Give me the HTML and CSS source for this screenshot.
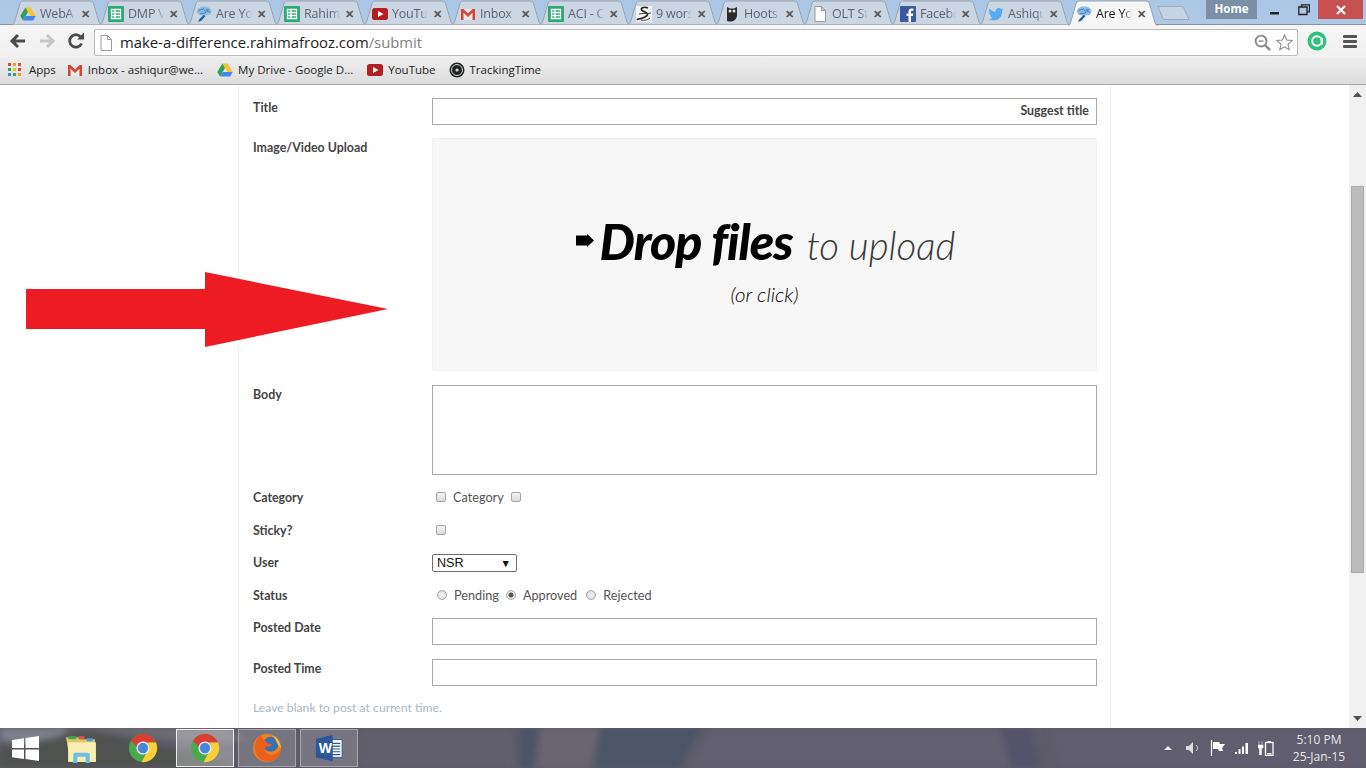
FILE: index.html
```html
<!DOCTYPE html>
<html lang="en">
<head>
<meta charset="utf-8">
<title>Are You - Submit</title>
<link rel="stylesheet" href="styles.css">
</head>
<body>
<svg class="defs" width="0" height="0" aria-hidden="true">
  <symbol id="tabshape" viewBox="0 0 90 25" preserveAspectRatio="none">
    <path d="M0 24.500C1.500 24.500 2 23.500 2.500 22L8 3.500C8.500 2 9.500 1 11.500 1H78C80 1 81 2 81.500 3.500L87 22C87.500 23.500 88.500 24.500 90 24.500"/>
  </symbol>
  <symbol id="i-drive" viewBox="0 0 16 16">
    <path fill="#fbc02d" d="M5.300 1.500h5.400l5 8.500H10.500z"/>
    <path fill="#2e9e5b" d="M5.300 1.500 .3 10l2.700 4.500L8 6z"/>
    <path fill="#4285f4" d="M3 14.500h10.200l2.500-4.500H5.700z"/>
  </symbol>
  <symbol id="i-sheet" viewBox="0 0 16 16">
    <rect width="16" height="16" rx="1" fill="#2fa974"/>
    <path fill="none" stroke="#fff" stroke-width="1.300" d="M3.500 3.500h9v9h-9zM3.500 6.500h9M3.500 9.500h9M7 3.500v9"/>
  </symbol>
  <symbol id="i-brain" viewBox="0 0 16 16">
    <path fill="#8fbce0" d="M1 5.500C1 2.500 4 .5 8 .5s7.500 2 7.500 4.500-2 4.800-5 4.300c-2 1-4 .8-5 0C3 9.500 1 8.500 1 5.500z"/>
    <path fill="none" stroke="#2f76b5" stroke-width=".9" d="M2.500 5c2-2.500 4-.5 5.500-2.500M4 8c2-2 4 1 6-2M8 5c2 0 4-.5 6 1.500M10 3c1 1 2 1 3 .5"/>
    <path fill="#1f5fa3" d="M7.500 9 9.500 10 5 15 2 15.800 3.500 13z"/>
  </symbol>
  <symbol id="i-yt" viewBox="0 0 16 16">
    <rect y="2" width="16" height="12" rx="2.500" fill="#b3201f"/>
    <path fill="#fff" d="M6 5l5.500 3L6 11z"/>
  </symbol>
  <symbol id="i-gmail" viewBox="0 0 16 16">
    <path fill="#e8e8e8" d="M1 3h14v11H1z"/>
    <path fill="#d5463a" d="M1 3h2.500L8 7.500 12.500 3H15v11h-2.500V6.800L8 11 3.500 6.800V14H1z"/>
  </symbol>
  <symbol id="i-s" viewBox="0 0 16 16">
    <rect width="16" height="16" fill="#f2f2f2"/>
    <path fill="none" stroke="#222" stroke-width="1.700" d="M12 2C7 0 3 3 7 5s7 3 2 6-7 1-8 3"/>
    <path fill="none" stroke="#444" stroke-width="1" d="M3 8c4-1 8 0 12-1M5 14c3 1 7 0 9-2"/>
  </symbol>
  <symbol id="i-owl" viewBox="0 0 16 16">
    <path fill="#2b2b2b" d="M3 1l3 1.500h4L13 1v8c0 3-2 6-6 6.500-1 0-2 0-4-.500z"/>
    <circle cx="6" cy="5" r="1.500" fill="#ddd"/><circle cx="10" cy="5" r="1.500" fill="#ddd"/>
  </symbol>
  <symbol id="i-doc" viewBox="0 0 16 16">
    <path fill="#fff" stroke="#9a9a9a" d="M3 .5h6.500L13.500 4.500V15.500H3zM9.500 .5v4h4"/>
  </symbol>
  <symbol id="i-fb" viewBox="0 0 16 16">
    <rect width="16" height="16" rx="1" fill="#3b5a9a"/>
    <path fill="#fff" d="M11 16V10h2l.3-2.500H11V6c0-.8.3-1.200 1.200-1.200h1.200V2.600C13 2.500 12.300 2.500 11.600 2.500 9.800 2.500 8.500 3.600 8.500 5.600v1.900h-2V10h2v6z"/>
  </symbol>
  <symbol id="i-tw" viewBox="0 0 16 16">
    <path fill="#55acee" d="M15.500 3.400c-.6.300-1.200.4-1.800.5.600-.4 1.100-1 1.400-1.700-.6.400-1.300.6-2 .8a3.100 3.100 0 0 0-5.300 2.800C5.200 5.700 2.900 4.500 1.400 2.600c-.8 1.400-.4 3.200 1 4.100-.5 0-1-.1-1.400-.4 0 1.500 1.100 2.800 2.500 3.100-.5.100-.9.100-1.400 0 .4 1.200 1.500 2.100 2.900 2.100A6.300 6.300 0 0 1 .5 13c5.800 3.500 14.200.200 13.600-8.200.6-.4 1-.9 1.400-1.400z"/>
  </symbol>
  <symbol id="i-chrome" viewBox="0 0 32 32">
    <circle cx="16" cy="16" r="15" fill="#4aa84e"/>
    <path fill="#dc3d33" d="M3.200 8.200A15 15 0 0 1 29.800 10H16a6 6 0 0 0-6 5z"/>
    <path fill="#fbd035" d="M29.800 10A15 15 0 0 1 14.500 31L21 19a6 6 0 0 0-.5-9z"/>
    <circle cx="16" cy="16" r="7" fill="#eee"/>
    <circle cx="16" cy="16" r="5.500" fill="#4a86d8"/>
  </symbol>
</svg>

<div class="screen">
  <header class="chrome">
    <div class="tabstrip">
      <div class="tab"><svg class="tab-bg"><use href="#tabshape"/></svg><svg class="fav"><use href="#i-drive"/></svg><span class="tab-title">WebA</span><span class="tab-x">✕</span></div>
      <div class="tab"><svg class="tab-bg"><use href="#tabshape"/></svg><svg class="fav"><use href="#i-sheet"/></svg><span class="tab-title">DMP V</span><span class="tab-x">✕</span></div>
      <div class="tab"><svg class="tab-bg"><use href="#tabshape"/></svg><svg class="fav"><use href="#i-brain"/></svg><span class="tab-title">Are Yo</span><span class="tab-x">✕</span></div>
      <div class="tab"><svg class="tab-bg"><use href="#tabshape"/></svg><svg class="fav"><use href="#i-sheet"/></svg><span class="tab-title">Rahim</span><span class="tab-x">✕</span></div>
      <div class="tab"><svg class="tab-bg"><use href="#tabshape"/></svg><svg class="fav"><use href="#i-yt"/></svg><span class="tab-title">YouTu</span><span class="tab-x">✕</span></div>
      <div class="tab"><svg class="tab-bg"><use href="#tabshape"/></svg><svg class="fav"><use href="#i-gmail"/></svg><span class="tab-title">Inbox</span><span class="tab-x">✕</span></div>
      <div class="tab"><svg class="tab-bg"><use href="#tabshape"/></svg><svg class="fav"><use href="#i-sheet"/></svg><span class="tab-title">ACI - C</span><span class="tab-x">✕</span></div>
      <div class="tab"><svg class="tab-bg"><use href="#tabshape"/></svg><svg class="fav"><use href="#i-s"/></svg><span class="tab-title">9 wors</span><span class="tab-x">✕</span></div>
      <div class="tab"><svg class="tab-bg"><use href="#tabshape"/></svg><svg class="fav"><use href="#i-owl"/></svg><span class="tab-title">Hoots</span><span class="tab-x">✕</span></div>
      <div class="tab"><svg class="tab-bg"><use href="#tabshape"/></svg><svg class="fav"><use href="#i-doc"/></svg><span class="tab-title">OLT St</span><span class="tab-x">✕</span></div>
      <div class="tab"><svg class="tab-bg"><use href="#tabshape"/></svg><svg class="fav"><use href="#i-fb"/></svg><span class="tab-title">Facebo</span><span class="tab-x">✕</span></div>
      <div class="tab"><svg class="tab-bg"><use href="#tabshape"/></svg><svg class="fav"><use href="#i-tw"/></svg><span class="tab-title">Ashiqu</span><span class="tab-x">✕</span></div>
      <div class="tab tab-active"><svg class="tab-bg"><use href="#tabshape"/></svg><svg class="fav"><use href="#i-brain"/></svg><span class="tab-title">Are Yo</span><span class="tab-x">✕</span></div>
      <svg class="newtab" viewBox="0 0 34 16"><path d="M1 1.500H24C26 1.500 26.500 2.500 27 3.500L32 14.500H8C6.500 14.500 6 14 5.500 12.500z"/></svg>
      <div class="win">
        <div class="home">Home</div>
        <div class="win-controls">
          <span class="win-btn"><svg class="win-ico" viewBox="0 0 12 12"><path d="M1 8h9v2.500H1z" fill="#222"/></svg></span>
          <span class="win-btn"><svg class="win-ico" viewBox="0 0 12 12"><path d="M3.500 2.500V.8h8v7H9.500M.8 3h8.200v7.500H.8z" fill="none" stroke="#222" stroke-width="1.300"/></svg></span>
          <span class="win-close"><svg class="win-ico" viewBox="0 0 12 12"><path d="M2 2l8 8M10 2l-8 8" stroke="#fff" stroke-width="2.200"/></svg></span>
        </div>
      </div>
    </div>

    <div class="toolbar">
      <svg class="nav" viewBox="0 0 18 18"><path d="M16 9H4M9 3 3 9l6 6" fill="none" stroke="#4a4a4a" stroke-width="3"/></svg>
      <svg class="nav" viewBox="0 0 18 18"><path d="M2 9h12M9 3l6 6-6 6" fill="none" stroke="#c6c6c6" stroke-width="3"/></svg>
      <svg class="nav nav-reload" viewBox="0 0 18 18"><path d="M14.500 11.500A6.200 6.200 0 1 1 13.500 4.800" fill="none" stroke="#4a4a4a" stroke-width="2.800"/><path d="M10 7.500h7V.5z" fill="#4a4a4a"/></svg>
      <div class="omnibox">
        <svg class="omni-doc" viewBox="0 0 16 16"><use href="#i-doc"/></svg>
        <span class="url">make-a-difference.rahimafrooz.com<span class="url-path">/submit</span></span>
        <svg class="omni-ico" viewBox="0 0 18 18"><circle cx="7.500" cy="7.500" r="5.800" fill="none" stroke="#8a8a8a" stroke-width="2"/><path d="M12 12l5 5" stroke="#8a8a8a" stroke-width="2.600"/><path d="M5 7.500h5" stroke="#8a8a8a" stroke-width="1.500"/></svg>
        <svg class="omni-ico" viewBox="0 0 18 18"><path d="M9 1l2.300 5.400 5.700.5-4.300 3.800 1.300 5.800L9 13.500l-5 3 1.300-5.800L1 6.900l5.700-.5z" fill="#fff" stroke="#8a8a8a" stroke-width="1.100"/></svg>
      </div>
      <svg class="ext" viewBox="0 0 20 20"><circle cx="10" cy="10" r="9.500" fill="#2fc27f"/><circle cx="10" cy="10" r="4.800" fill="none" stroke="#fff" stroke-width="2"/><path d="M14.800 7v6.500" stroke="#fff" stroke-width="2"/></svg>
      <div class="menu"><i></i><i></i><i></i></div>
    </div>

    <div class="bookmarks">
      <span class="bm"><span class="apps"><i></i><i></i><i></i><i></i><i></i><i></i><i></i><i></i><i></i></span>Apps</span>
      <span class="bm"><svg class="fav"><use href="#i-gmail"/></svg>Inbox - ashiqur@we...</span>
      <span class="bm bm-wide"><svg class="fav"><use href="#i-drive"/></svg>My Drive - Google D...</span>
      <span class="bm bm-yt"><svg class="fav"><use href="#i-yt"/></svg>YouTube</span>
      <span class="bm"><svg class="fav" viewBox="0 0 16 16"><circle cx="8" cy="8" r="7.500" fill="#222"/><circle cx="8" cy="8" r="5.500" fill="none" stroke="#cfd8d6" stroke-width="1"/><circle cx="8" cy="8" r="1.600" fill="#ddd"/></svg>TrackingTime</span>
    </div>
  </header>

  <main class="viewport">
    <div class="page">
      <form class="panel">
        <div class="row row-title">
          <label class="lbl">Title</label>
          <div class="input input-title"><span class="suggest">Suggest title</span></div>
        </div>
        <div class="row row-upload">
          <label class="lbl">Image/Video Upload</label>
          <div class="dropzone">
            <div class="drop-line">
              <svg class="drop-arrow" viewBox="0 0 18 13"><path d="M0 1.500h11V0l7 6.500-7 6.500v-1.500H0z" fill="#000"/></svg>
              <span class="drop-strong">Drop files</span>
              <span class="drop-light">to upload</span>
            </div>
            <div class="drop-click">(or click)</div>
          </div>
        </div>
        <div class="row row-body">
          <label class="lbl">Body</label>
          <div class="input input-body"></div>
        </div>
        <div class="row row-check">
          <label class="lbl">Category</label>
          <div class="opts"><span class="check"></span><span class="opt-text">Category</span><span class="check"></span></div>
        </div>
        <div class="row row-sticky">
          <label class="lbl">Sticky?</label>
          <div class="opts"><span class="check"></span></div>
        </div>
        <div class="row row-user">
          <label class="lbl">User</label>
          <div class="select"><span>NSR</span><span class="caret">▼</span></div>
        </div>
        <div class="row row-status">
          <label class="lbl">Status</label>
          <div class="opts opts-radio">
            <span class="radio"></span><span class="opt-text">Pending</span>
            <span class="radio radio-on"></span><span class="opt-text opt-approved">Approved</span>
            <span class="radio"></span><span class="opt-text">Rejected</span>
          </div>
        </div>
        <div class="row row-date">
          <label class="lbl">Posted Date</label>
          <div class="input"></div>
        </div>
        <div class="row row-time">
          <label class="lbl">Posted Time</label>
          <div class="input"></div>
        </div>
        <p class="hint">Leave blank to post at current time.</p>
      </form>
    </div>
    <div class="scrollbar">
      <svg class="sb-arrow" viewBox="0 0 9 5"><path d="M4.500 5 0 0h9z" fill="#505050"/></svg>
      <div class="sb-thumb"></div>
      <svg class="sb-arrow" viewBox="0 0 9 5"><path d="M4.500 5 0 0h9z" fill="#505050"/></svg>
    </div>
    <svg class="red-arrow" viewBox="0 0 362 76"><path d="M0 17H179V0L362 37 179 75V57H0z" fill="#ed1c24"/></svg>
  </main>

  <footer class="taskbar">
    <svg class="tb-wall" viewBox="0 0 1366 40" preserveAspectRatio="none" aria-hidden="true">
      <path fill="#7e828d" d="M0 0H70L58 10 30 16 0 12z"/>
      <path fill="#50524f" d="M0 40V20L40 13 70 6 95 3 130 12 190 24 240 40z"/>
      <path fill="#6e6c72" d="M75 0H225L250 12 200 16 140 8z"/>
      <path fill="#625f6c" d="M360 0H510L515 40H360z"/>
      <path fill="#4c5468" d="M520 0H540L534 40H520z"/>
      <path fill="#6a6570" d="M540 0H600L590 40H535z"/>
      <path fill="#4a5566" d="M600 0H702L690 18 680 40H596z"/>
      <path fill="#625f70" d="M712 0H1000L1010 40H690z"/>
      <path fill="#55536a" d="M1000 0H1030L1040 40H1012z"/>
      <path fill="#605d6e" d="M1050 0H1366V40H1060z"/>
    </svg>
    <svg class="start" viewBox="0 0 27 25"><path d="M0 4 12 2.300V12H0zM13.500 2 27 0V12H13.500zM0 13.500H12V23L0 21.300zM13.500 13.500H27V25L13.500 23z" fill="#fff"/></svg>
    <span class="tb-item">
      <svg class="tb-ico tb-folder" viewBox="0 0 32 32"><path d="M1 5h12l2 2h14v22H5z" fill="#e3c766"/><path d="M3 10h27v19H3z" fill="#fbeeb0"/><path d="M3 4h8v3H3z" fill="#3aa655"/><path d="M13 4h6v3h-6z" fill="#d9534f"/><path d="M21 6h6v3h-6z" fill="#4a9ae0"/><path d="M8 30V22a2 2 0 0 1 2-2h12a2 2 0 0 1 2 2v8h-4v-6h-8v6z" fill="#6cc0ea"/></svg>
    </span>
    <span class="tb-item"><svg class="tb-ico"><use href="#i-chrome"/></svg></span>
    <span class="tb-item tb-open tb-active"><svg class="tb-ico"><use href="#i-chrome"/></svg></span>
    <span class="tb-item tb-open">
      <svg class="tb-ico" viewBox="0 0 32 32"><circle cx="16" cy="16" r="15" fill="#f0811f"/><circle cx="20" cy="12" r="8" fill="#3a6fb0"/><path d="M9 2C1 9 0 22 11 29c9 4 19-2 20-12-2 4-7 7-12 6-5-2-6-6-4-9 2 1 5 1 6-2-3 0-5-1-6-3-2-1-4-3-6-7z" fill="#e8601c"/><path d="M22 3c5 2 8 7 9 13l-3-3-3-6z" fill="#f7c531"/></svg>
    </span>
    <span class="tb-item tb-open">
      <svg class="tb-ico" viewBox="0 0 32 32"><path d="M12 7h18v19H12z" fill="#fff" stroke="#2b579a"/><path d="M19 11h9M19 14h9M19 17h9M19 20h9M19 23h9" stroke="#2b579a" stroke-width="1.200"/><path d="M2 6 20 2v28L2 26z" fill="#2b579a"/><text x="5" y="21" class="word-w">W</text></svg>
    </span>
    <div class="tray">
      <svg class="tray-up" viewBox="0 0 8 4"><path d="M4 0l4 4H0z" fill="#fff"/></svg>
      <svg class="tray-ico" viewBox="0 0 16 14"><path d="M0 5h3l4-4v12L3 9H0z" fill="#ddd"/><path d="M10 4c2 2 2 4 0 6" fill="none" stroke="#ddd"/></svg>
      <svg class="tray-ico" viewBox="0 0 16 16"><path d="M1.500 0v16" stroke="#fff" stroke-width="1.200"/><path d="M3 2h6l1 2h5l-3 4 1 3H9L8 9H3z" fill="#fff"/></svg>
      <svg class="tray-ico" viewBox="0 0 16 14"><path d="M1 11h2v2H1zM4.500 8h2v5h-2zM8 5.500h2V13H8zM11.500 2h2.500v11h-2.500z" fill="#fff"/></svg>
      <svg class="tray-ico" viewBox="0 0 16 16"><path d="M1 1v4M4 1v4M0 5h5v3H3.500v7H1.500V8H0z" fill="#fff" stroke="#fff" stroke-width=".5"/><rect x="7.500" y="2.500" width="7.500" height="13" fill="none" stroke="#fff" stroke-width="1.300"/><path d="M9.500 1h3.500v1.500H9.500zM9 13h4.500v1.500H9z" fill="#fff"/></svg>
      <div class="clock"><span>5:10 PM</span><span>25-Jan-15</span></div>
    </div>
  </footer>
</div>
</body>
</html>
```
FILE: styles.css
```css
* { box-sizing: border-box; }
html, body { margin: 0; padding: 0; width: 1366px; height: 768px; overflow: hidden; }
body { font-family: Lato, "Liberation Sans", sans-serif; background: #fff; color: #333; }
.defs { position: absolute; }
.screen { display: flex; flex-direction: column; width: 1366px; height: 768px; }

/* Browser chrome */
.chrome { flex: 0 0 85px; display: flex; flex-direction: column; }
.tabstrip { flex: 0 0 25px; position: relative; display: flex; padding-left: 12px; background: linear-gradient(#a9c6e6, #aec9e6); box-shadow: inset 0 -1px #8b9098; }
.tab { position: relative; width: 88px; height: 25px; display: flex; align-items: center; padding: 2px 0 0 8px; font-family: "Open Sans", sans-serif; font-size: 12.500px; color: #5c6470; flex: none; }
.tab-bg { position: absolute; left: 0; top: 0; width: 90px; height: 25px; fill: #ccd6e3; stroke: #9aa3ae; stroke-width: 1; overflow: visible; }
.tab .fav { position: relative; }
.tab-title { position: relative; width: 36px; margin-left: 4px; overflow: hidden; white-space: nowrap; letter-spacing: -.2px; -webkit-mask-image: linear-gradient(90deg, #000 78%, transparent); mask-image: linear-gradient(90deg, #000 78%, transparent); }
.tab-x { position: relative; margin-left: 4px; font-size: 11px; font-weight: 700; color: #555; width: 10px; text-align: center; }
.tab-active { z-index: 2; color: #1a1a1a; }
.tab-active .tab-bg { fill: #f6f6f6; height: 26px; }
.fav { width: 16px; height: 16px; flex: none; }
.newtab { width: 34px; height: 16px; margin: 5px 0 0 1px; flex: none; fill: #c5d3e4; stroke: #9aa9bb; position: relative; z-index: 1; }
.win { margin-left: auto; display: flex; align-items: flex-start; }
.home { width: 51px; height: 19px; margin-right: 3px; background: #7b8fa6; color: #fff; font-family: "Open Sans", sans-serif; font-size: 11.500px; font-weight: 700; text-align: center; line-height: 17px; }
.win-controls { display: flex; }
.win-btn { width: 29px; height: 19px; display: flex; align-items: center; justify-content: center; }
.win-ico { width: 12px; height: 12px; }
.win-close { width: 45px; height: 19px; background: #c75050; display: flex; align-items: center; justify-content: center; margin-right: 3px; }

.toolbar { flex: 0 0 32px; display: flex; align-items: center; background: linear-gradient(#f6f6f6, #f1f1f1); padding-left: 9px; }
.nav { width: 18px; height: 18px; margin-right: 11px; flex: none; }
.nav-reload { margin-left: 0; margin-right: 9px; }
.omnibox { width: 1204px; height: 27px; margin-top: 3px; background: #fff; border: 1px solid #bcbcbc; border-radius: 2px; display: flex; align-items: center; padding: 0 4px 0 3px; gap: 5px; }
.omni-doc { width: 16px; height: 16px; flex: none; }
.url { flex: 1; font-family: "Open Sans", sans-serif; font-size: 14.850px; color: #222; white-space: nowrap; padding: 0 0 2px 1px; }
.url-path { color: #808080; }
.omni-ico { width: 17px; height: 17px; flex: none; }
.ext { width: 20px; height: 20px; margin-left: 9px; flex: none; }
.menu { margin-left: 16px; width: 14px; display: flex; flex-direction: column; gap: 2px; }
.menu i { display: block; height: 3px; background: #555; border-radius: 1px; }

.bookmarks { flex: 0 0 28px; display: flex; align-items: center; padding: 0 0 2px 8px; gap: 11px; background: linear-gradient(#efefef, #dcdcdc); border-bottom: 1px solid #a8a8a8; font-family: "Open Sans", sans-serif; font-size: 11.500px; color: #222; }
.bm { display: flex; align-items: center; gap: 5px; white-space: nowrap; }
.bm-wide { margin-left: 3px; margin-right: 3px; }
.bm-yt { margin-right: 2px; }
.apps { width: 14px; height: 14px; display: grid; grid-template-columns: repeat(3, 3px); grid-template-rows: repeat(3, 3px); gap: 2px; margin-right: 2px; }
.apps i { display: block; }
.apps i:nth-child(1) { background: #d9463a; } .apps i:nth-child(2) { background: #e8a020; } .apps i:nth-child(3) { background: #e05a2b; }
.apps i:nth-child(4) { background: #3aa655; } .apps i:nth-child(5) { background: #e8c020; } .apps i:nth-child(6) { background: #d9463a; }
.apps i:nth-child(7) { background: #4285f4; } .apps i:nth-child(8) { background: #3aa655; } .apps i:nth-child(9) { background: #f4a020; }

/* Page */
.viewport { flex: 0 0 643px; position: relative; display: flex; overflow: hidden; background: #fff; }
.page { flex: 1; padding-left: 238px; }
.panel { width: 873px; height: 700px; border: 1px solid #f3f3f3; border-top: 0; padding: 13px 13px 0 14px; }
.row { display: flex; align-items: flex-start; }
.lbl { flex: 0 0 179px; padding-top: 1px; font-size: 12.400px; font-weight: 700; color: #444; line-height: 18px; }
.input { width: 665px; height: 27px; border: 1px solid #a9a9a9; background: #fff; }
.input-title { display: flex; align-items: center; justify-content: flex-end; padding: 0 7px 3px 0; }
.suggest { font-size: 12.400px; font-weight: 700; color: #444; }
.row-upload { margin-top: 13px; }
.dropzone { width: 665px; height: 233px; background: #f7f7f7; border: 1px solid #f1f1f1; border-radius: 2px; display: flex; flex-direction: column; align-items: center; color: #000; }
.drop-line { display: flex; align-items: baseline; margin-top: 72px; margin-left: 2px; height: 71px; white-space: nowrap; }
.drop-arrow { width: 18px; height: 13px; margin-right: 6px; position: relative; top: -13px; }
.drop-strong { font-size: 50px; font-weight: 900; font-style: italic; letter-spacing: -1px; }
.drop-light { font-size: 38.500px; font-weight: 300; font-style: italic; margin-left: 14px; color: #3a3a3a; }
.drop-click { font-size: 20.500px; font-style: italic; color: #000; font-weight: 300; }
.row-body { margin-top: 14px; }
.input-body { height: 90px; }
.row-check { margin-top: 13px; height: 18px; }
.row-sticky { margin-top: 15px; height: 18px; }
.row-user { margin-top: 15px; height: 18px; }
.row-user .lbl { padding-top: 0; }
.row-status { margin-top: 14px; height: 18px; }
.row-date { margin-top: 14px; }
.row-time { margin-top: 14px; }
.opts { display: flex; align-items: center; height: 18px; padding-left: 4px; font-size: 12.700px; color: #555; }
.opts-radio { padding-left: 5px; }
.check { width: 10px; height: 10px; border: 1px solid #a5a5a5; border-radius: 2px; background: linear-gradient(#f4f4f4, #dcdcdc); flex: none; }
.opt-text { margin: -1px 7px 0 7px; }
.opt-approved { margin-right: 9px; }
.radio { width: 10px; height: 10px; border: 1px solid #a8a8a8; border-radius: 50%; background: radial-gradient(#f4f4f4, #d8d8d8); flex: none; }
.radio-on { background: radial-gradient(#555 0 2px, #ececec 3px); }
.select { width: 85px; height: 18px; border: 1px solid #707070; border-radius: 2px; background: #fff; display: flex; justify-content: space-between; align-items: center; padding: 0 5px 1px 4px; font-family: "Liberation Sans", sans-serif; font-size: 12.600px; color: #111; }
.caret { font-size: 10.500px; color: #111; }
.hint { margin: 14px 0 0; font-size: 12.200px; color: #a9b7c6; line-height: 16px; }
.scrollbar { flex: 0 0 17px; background: #f0f0f0; display: flex; flex-direction: column; justify-content: space-between; align-items: center; padding: 0 0 7px; }
.sb-arrow { width: 9px; height: 5px; flex: none; margin-top: 7px; }
.sb-arrow:first-child { transform: rotate(180deg); }
.sb-thumb { width: 13px; height: 387px; background: #bcbcbc; border: 1px solid #a8a8a8; margin: 89px 0 auto; }
.red-arrow { position: absolute; left: 26px; top: 187px; width: 362px; height: 76px; }

/* Taskbar */
.taskbar { flex: 0 0 40px; display: flex; align-items: center; position: relative; overflow: hidden; background: #5d5b68; padding-left: 12px; }
.tb-wall { position: absolute; left: 0; top: 0; width: 1366px; height: 40px; filter: blur(3px); }
.taskbar > :not(.tb-wall) { position: relative; }
.start { width: 27px; height: 25px; margin-right: 26px; flex: none; }
.tb-item { width: 58px; height: 38px; display: flex; align-items: center; justify-content: center; flex: none; margin-right: 4px; }
.tb-item:nth-of-type(1) { margin-left: -13px; }
.tb-ico { width: 30px; height: 30px; }
.tb-folder { width: 33px; height: 33px; }
.tb-open { background: rgba(255,255,255,.16); border: 1px solid rgba(255,255,255,.35); }
.tb-active { background: rgba(255,255,255,.3); border: 1px solid rgba(255,255,255,.85); }
.word-w { font-family: "Liberation Sans", sans-serif; font-size: 15px; font-weight: 700; fill: #fff; }
.tray { margin-left: auto; display: flex; align-items: center; padding-right: 16px; color: #eee; }
.tray-up { width: 8px; height: 4px; margin-right: 14px; }
.tray-ico { width: 16px; height: 16px; margin-right: 8px; }
.clock { display: flex; flex-direction: column; align-items: center; width: 62px; margin-left: 6px; font-family: "Open Sans", sans-serif; font-size: 12px; line-height: 17px; color: #e6e6e6; }
```
